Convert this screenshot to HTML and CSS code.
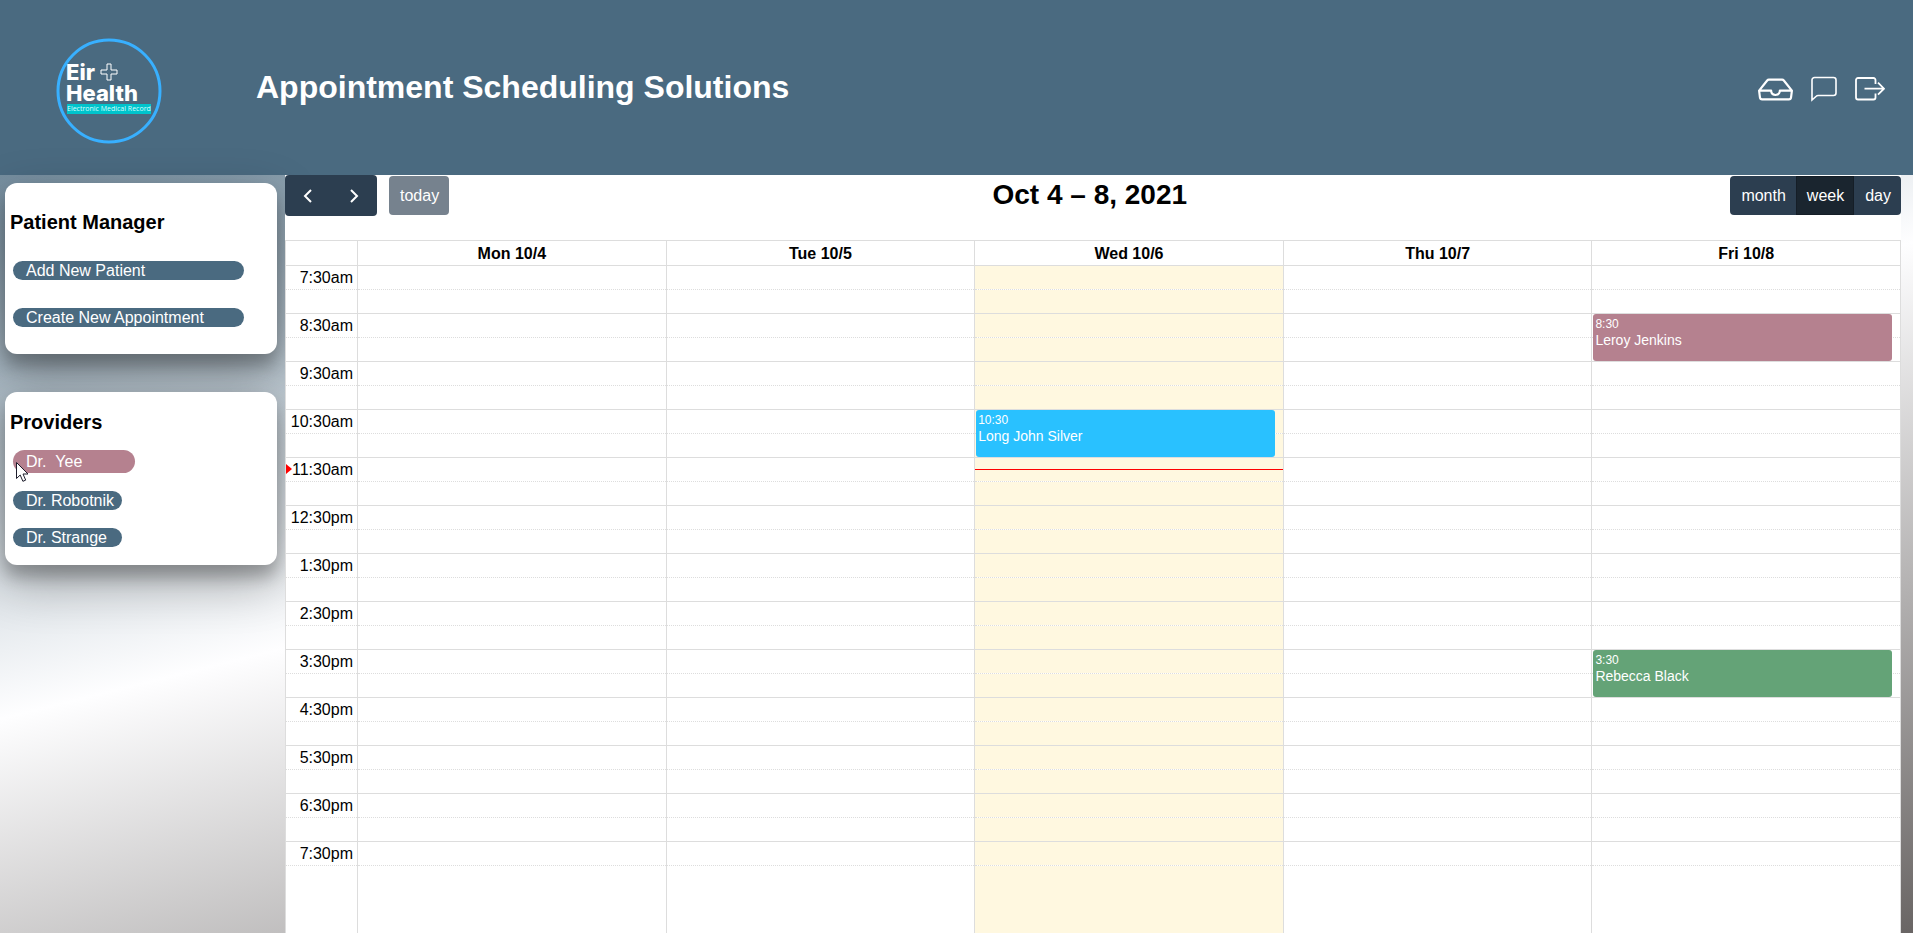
FILE: index.html
```html
<!DOCTYPE html>
<html lang="en">
<head>
<meta charset="utf-8">
<title>Appointment Scheduling Solutions</title>
<link rel="stylesheet" href="styles.css">
</head>
<body>
<header class="banner">
  <svg class="logo" viewBox="0 0 106 106" role="img" aria-label="Eir Health">
    <circle cx="53" cy="53" r="51" fill="none" stroke="#38b0ff" stroke-width="3"/>
    <text class="logo-name" x="10" y="42">Eir</text>
    <path d="M51 26h4v6h6v4h-6v6h-4v-6h-6v-4h6z" fill="none" stroke="#fff" stroke-width="1"/>
    <text class="logo-name" x="10" y="63">Health</text>
    <rect x="11" y="66" width="84" height="10" fill="#00c4cc"/>
    <text class="logo-tag" x="11" y="73">Electronic Medical Record</text>
  </svg>
  <h1 class="banner-title">Appointment Scheduling Solutions</h1>
  <nav class="banner-nav">
    <a href="#inbox" aria-label="Inbox"><svg class="icon-inbox" viewBox="0 0 16 16" fill="#fff"><path d="M4.98 4a.5.5 0 0 0-.39.188L1.54 8H6a.5.5 0 0 1 .5.5 1.5 1.5 0 1 0 3 0A.5.5 0 0 1 10 8h4.46l-3.05-3.812A.5.5 0 0 0 11.02 4H4.98zm9.954 5H10.45a2.5 2.5 0 0 1-4.9 0H1.066l.32 2.562a.5.5 0 0 0 .497.438h12.234a.5.5 0 0 0 .496-.438L14.933 9zM3.809 3.563A1.5 1.5 0 0 1 4.981 3h6.038a1.5 1.5 0 0 1 1.172.563l3.7 4.625a.5.5 0 0 1 .105.374l-.39 3.124A1.5 1.5 0 0 1 14.117 13H1.883a1.5 1.5 0 0 1-1.489-1.314l-.39-3.124a.5.5 0 0 1 .106-.374l3.7-4.625z"/></svg></a>
    <a href="#messages" aria-label="Messages"><svg class="icon-chat" viewBox="0 0 26 26" fill="none" stroke="#fff" stroke-width="1.6"><path d="M1 24V4a2.500 2.500 0 0 1 2.500-2.500h19A2.500 2.500 0 0 1 25 4v13a2.500 2.500 0 0 1-2.500 2.500H7a2.500 2.500 0 0 0-1.800.8z"/></svg></a>
    <a href="#logout" aria-label="Log out"><svg class="icon-exit" viewBox="0 0 30 26" fill="none" stroke="#fff" stroke-width="1.800"><path d="M20.500 8V4a2 2 0 0 0-2-2H3a2 2 0 0 0-2 2v17.500a2 2 0 0 0 2 2h15.500a2 2 0 0 0 2-2v-4M9.500 12.700H29M23 6.700l6 6-6 6"/></svg></a>
  </nav>
</header>
<main class="layout">
  <aside class="sidebar">
    <section class="card">
      <h2 class="card-title">Patient Manager</h2>
      <div class="actions">
        <button type="button" class="pill">Add New Patient</button>
        <button type="button" class="pill">Create New Appointment</button>
      </div>
    </section>
    <section class="card card-providers">
      <h2 class="card-title">Providers</h2>
      <div class="providers">
        <button type="button" class="pill pill-active">Dr. &nbsp;Yee
          <svg class="cursor" viewBox="0 0 13 20" aria-hidden="true"><path d="M.5.500v16l3.700-3.500 2.700 6.300 2.800-1.200L7 12h5z" fill="#fff" stroke="#1d1d2b"/></svg>
        </button>
        <button type="button" class="pill">Dr. Robotnik</button>
        <button type="button" class="pill">Dr. Strange</button>
      </div>
    </section>
  </aside>
  <section class="calendar">
    <div class="toolbar">
      <div class="toolbar-start">
        <div class="group">
          <button type="button" class="btn btn-arrow" aria-label="Previous week"><svg viewBox="0 0 10 16"><path d="M8 2L2 8l6 6"/></svg></button>
          <button type="button" class="btn btn-arrow" aria-label="Next week"><svg viewBox="0 0 10 16"><path d="M2 2l6 6-6 6"/></svg></button>
        </div>
        <button type="button" class="btn btn-today" disabled>today</button>
      </div>
      <h2 class="range">Oct 4 – 8, 2021</h2>
      <div class="group">
        <button type="button" class="btn">month</button>
        <button type="button" class="btn btn-current">week</button>
        <button type="button" class="btn">day</button>
      </div>
    </div>
    <div class="grid-wrap">
    <table class="week">
      <colgroup><col class="axis"><col><col><col class="today"><col><col></colgroup>
      <thead>
        <tr><td></td><th scope="col">Mon 10/4</th><th scope="col">Tue 10/5</th><th scope="col" class="day-now">Wed 10/6</th><th scope="col">Thu 10/7</th><th scope="col">Fri 10/8</th></tr>
      </thead>
      <tbody>
        <tr class="hour"><th scope="row">7:30am</th><td></td><td></td><td></td><td></td><td></td></tr>
        <tr class="half"><td></td><td></td><td></td><td></td><td></td><td></td></tr>
        <tr class="hour"><th scope="row">8:30am</th><td></td><td></td><td></td><td></td><td><div class="event event-rose"><span class="event-time">8:30</span><span>Leroy Jenkins</span></div></td></tr>
        <tr class="half"><td></td><td></td><td></td><td></td><td></td><td></td></tr>
        <tr class="hour"><th scope="row">9:30am</th><td></td><td></td><td></td><td></td><td></td></tr>
        <tr class="half"><td></td><td></td><td></td><td></td><td></td><td></td></tr>
        <tr class="hour"><th scope="row">10:30am</th><td></td><td></td><td><div class="event event-sky"><span class="event-time">10:30</span><span>Long John Silver</span></div></td><td></td><td></td></tr>
        <tr class="half"><td></td><td></td><td></td><td></td><td></td><td></td></tr>
        <tr class="hour"><th scope="row"><i class="now-arrow"></i>11:30am</th><td></td><td></td><td><i class="now-line"></i></td><td></td><td></td></tr>
        <tr class="half"><td></td><td></td><td></td><td></td><td></td><td></td></tr>
        <tr class="hour"><th scope="row">12:30pm</th><td></td><td></td><td></td><td></td><td></td></tr>
        <tr class="half"><td></td><td></td><td></td><td></td><td></td><td></td></tr>
        <tr class="hour"><th scope="row">1:30pm</th><td></td><td></td><td></td><td></td><td></td></tr>
        <tr class="half"><td></td><td></td><td></td><td></td><td></td><td></td></tr>
        <tr class="hour"><th scope="row">2:30pm</th><td></td><td></td><td></td><td></td><td></td></tr>
        <tr class="half"><td></td><td></td><td></td><td></td><td></td><td></td></tr>
        <tr class="hour"><th scope="row">3:30pm</th><td></td><td></td><td></td><td></td><td><div class="event event-green"><span class="event-time">3:30</span><span>Rebecca Black</span></div></td></tr>
        <tr class="half"><td></td><td></td><td></td><td></td><td></td><td></td></tr>
        <tr class="hour"><th scope="row">4:30pm</th><td></td><td></td><td></td><td></td><td></td></tr>
        <tr class="half"><td></td><td></td><td></td><td></td><td></td><td></td></tr>
        <tr class="hour"><th scope="row">5:30pm</th><td></td><td></td><td></td><td></td><td></td></tr>
        <tr class="half"><td></td><td></td><td></td><td></td><td></td><td></td></tr>
        <tr class="hour"><th scope="row">6:30pm</th><td></td><td></td><td></td><td></td><td></td></tr>
        <tr class="half"><td></td><td></td><td></td><td></td><td></td><td></td></tr>
        <tr class="hour"><th scope="row">7:30pm</th><td></td><td></td><td></td><td></td><td></td></tr>
        <tr class="rest"><td></td><td></td><td></td><td></td><td></td><td></td></tr>
      </tbody>
    </table>
    </div>
  </section>
</main>
</body>
</html>
```

FILE: styles.css
```css
* { box-sizing: border-box; }

body {
  margin: 0;
  min-height: 100vh;
  display: flex;
  flex-direction: column;
  font-family: "Liberation Sans", Arial, sans-serif;
  font-size: 16px;
  color: #000;
  background: linear-gradient(166deg, #4a6a80 0%, #fefeff 51%, #696564 100%);
}

h1, h2 { margin: 0; }

button {
  font: inherit;
  border: 0;
  cursor: pointer;
}

/* Banner */
.banner {
  display: flex;
  align-items: center;
  padding: 38px 28px 31px 56px;
  background: #4a6a80;
}
.logo { width: 106px; height: 106px; }
.logo-name {
  font-family: Inter, sans-serif;
  font-size: 22px;
  font-weight: 800;
  fill: #fff;
}
.logo-tag {
  font-family: "Open Sans", sans-serif;
  font-size: 7px;
  fill: #d8ffff;
}
.banner-title {
  margin: 0 0 8px 94px;
  font-size: 32px;
  line-height: 36px;
  color: #fff;
}
.banner-nav {
  display: flex;
  align-items: center;
  gap: 18px;
  margin: 0 0 4px auto;
}
.banner-nav a { display: flex; }
.icon-inbox { width: 35px; height: 35px; }
.icon-chat { width: 26px; height: 26px; }
.icon-exit { width: 30px; height: 26px; }

/* Layout */
.layout {
  flex: 1;
  display: grid;
  grid-template-columns: 285px 1fr;
  padding-right: 12px;
}

/* Sidebar */
.sidebar {
  display: flex;
  flex-direction: column;
  gap: 38px;
  padding: 8px 8px 0 5px;
}
.card {
  padding: 27px 5px;
  border-radius: 12px;
  background: #fff;
  box-shadow:
    0 12px 16px rgba(0, 0, 0, .24),
    0 17px 50px rgba(0, 0, 0, .3);
}
.card-providers { padding: 18px 5px; }
.card-title {
  font-size: 20px;
  line-height: 24px;
}
.actions {
  display: flex;
  flex-direction: column;
  gap: 28px;
  padding: 27px 28px 0 3px;
}
.providers {
  display: flex;
  flex-direction: column;
  align-items: flex-start;
  gap: 18px;
  padding: 16px 0 0 3px;
}
.pill {
  position: relative;
  padding: 0 13px;
  border-radius: 10px;
  background: #4a6a80;
  color: #fff;
  line-height: 19px;
  text-align: left;
}
.providers .pill { width: 109px; white-space: nowrap; }
.providers .pill-active {
  width: 122px;
  border-radius: 12px;
  background: #b5818f;
  line-height: 23px;
}
.cursor {
  position: absolute;
  left: 3px;
  top: 12px;
  width: 13px;
  height: 20px;
  z-index: 1;
}

/* Calendar */
.calendar {
  position: relative;
  display: flex;
  flex-direction: column;
  background: #fff;
}
.toolbar {
  display: flex;
  align-items: center;
  justify-content: space-between;
  margin-bottom: 24px;
}
.toolbar-start {
  display: flex;
  align-items: center;
  gap: 12px;
}
.group {
  display: flex;
  border-radius: 4px;
  overflow: hidden;
}
.btn {
  height: 39px;
  padding: 0 10px 0 11px;
  background: #2c3e50;
  color: #fff;
}
.btn-arrow {
  width: 46px;
  height: 41px;
  padding: 0 10px;
}
.btn-arrow svg {
  width: 10px;
  height: 16px;
  vertical-align: middle;
  fill: none;
  stroke: #fff;
  stroke-width: 2;
}
.btn-today {
  border-radius: 4px;
  background: #76828e;
}
.btn-current {
  background: #1a252f;
  box-shadow: inset 0 0 0 1px #151e27;
}
.range { font-size: 28px; line-height: 36px; padding-bottom: 2px; }

.grid-wrap { flex: 1; display: grid; }
.week {
  width: 100%;
  height: 100%;
  table-layout: fixed;
  border-collapse: collapse;
}
.axis { width: 72px; }
.today { background: #fff8e0; }
.week th, .week td {
  position: relative;
  padding: 0;
  border: 1px solid #ddd;
}
.week thead tr { height: 25px; }
.week thead th { line-height: 23px; }
.week .day-now { background: #fff; }
.week tbody th {
  padding-right: 4px;
  font-weight: 400;
  line-height: 23px;
  text-align: right;
}
.hour, .half { height: 24px; }
.week .hour th, .week .hour td { border-bottom: 1px dotted #ddd; }
.week .half td, .week .rest td { border-top: 1px dotted #ddd; }
.week .rest td { border-bottom: 0; }

.event {
  position: absolute;
  left: 1px;
  right: 8px;
  top: 0;
  height: 47px;
  z-index: 1;
  display: flex;
  flex-direction: column;
  padding: 2px;
  border-radius: 3px;
  color: #fff;
  font-size: 14px;
  line-height: 17px;
}
.event-time { font-size: 12px; line-height: 16px; }
.event-rose { background: #b5818f; }
.event-sky { background: #29c1ff; }
.event-green { background: #64a377; }

.now-line {
  position: absolute;
  left: 0;
  right: 0;
  top: 11px;
  border-top: 1px solid #f00;
}
.now-arrow {
  position: absolute;
  left: 0;
  top: 6px;
  border: solid transparent;
  border-width: 5px 0 5px 6px;
  border-left-color: #f00;
}
```
